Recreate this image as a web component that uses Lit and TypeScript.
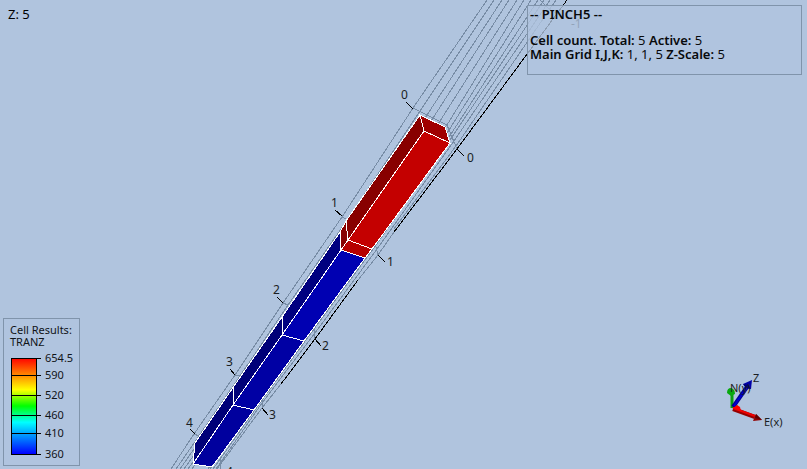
import { LitElement, html, svg, css } from "lit";
import { customElement } from "lit/decorators.js";

type Pt = [number, number];

const pts = (list: Pt[]) => list.map((p) => p.join(",")).join(" ");

// Reservoir grid box: lines that run along the column, front to back.
const gridLines: Pt[][] = [
  [[487, 0], [413, 108], [342, 217], [283, 303], [235, 375], [194, 434], [171, 469]],
  [[494, 0], [420, 111], [348, 219], [288, 305], [240, 376], [199, 436], [176, 469]],
  [[502, 0], [427, 115], [180, 469]],
  [[509, 0], [433, 118], [184, 469]],
  [[517, 0], [440, 121], [188, 469]],
  [[524, 0], [447, 125], [192, 469]],
  [[531, 0], [449, 130], [375, 235], [313, 321], [262, 392], [208, 469]],
  [[538, 0], [451, 134], [376, 241], [314, 325], [262, 396], [210, 469]],
  [[544, 0], [452, 137], [376, 245], [314, 329], [262, 400], [213, 469]],
  [[550, 0], [454, 141], [377, 249], [315, 333], [262, 403], [216, 469]],
  [[556, 0], [456, 146], [394, 229]],
  [[394, 232], [378, 255], [358, 280]],
  [[281, 384], [262, 408], [217, 469]],
  [[413, 108], [447, 125], [457, 149]],
  [[342, 217], [348, 220]],
  [[374, 244], [376, 247], [378, 255]],
  [[283, 303], [288, 305]],
  [[314, 329], [315, 339]],
  [[235, 375], [240, 376]],
  [[263, 398], [262, 408]],
  [[194, 434], [199, 436]],
  [[220, 457], [221, 469]],
  [[540, 0], [548, 8], [562, 17]],
];

const darkLines: Pt[][] = [
  [[567, 0], [457, 149], [394, 232]],
  [[358, 280], [315, 339], [281, 384]],
  [[406, 102], [413, 109]],
  [[457, 149], [464, 156]],
  [[335, 210], [342, 216]],
  [[378, 255], [385, 262]],
  [[277, 297], [283, 303]],
  [[315, 339], [321, 346]],
  [[230, 369], [235, 375]],
  [[262, 408], [268, 415]],
  [[190, 429], [195, 434]],
];

const faces: { fill: string; at: Pt[] }[] = [
  { fill: "#a00000", at: [[420, 115], [445, 127], [450, 143], [424, 131]] },
  { fill: "#880000", at: [[420, 115], [424, 131], [348, 240], [346, 221]] },
  { fill: "#c40000", at: [[424, 131], [450, 143], [372, 249], [348, 240]] },
  { fill: "#880000", at: [[346, 221], [348, 240], [341, 250], [340, 232]] },
  { fill: "#b60000", at: [[348, 240], [372, 249], [365, 258], [341, 250]] },
  { fill: "#000080", at: [[340, 232], [341, 250], [282, 335], [282, 317]] },
  { fill: "#0000b2", at: [[341, 250], [365, 258], [304, 341], [282, 335]] },
  { fill: "#000078", at: [[282, 317], [282, 335], [233, 405], [234, 386]] },
  { fill: "#0000a4", at: [[282, 335], [304, 341], [254, 410], [233, 405]] },
  { fill: "#000078", at: [[234, 386], [233, 405], [193, 464], [195, 443]] },
  { fill: "#00009e", at: [[233, 405], [254, 410], [212, 467], [193, 464]] },
];

const labels: { text: string; x: number; y: number }[] = [
  { text: "0", x: 401, y: 99 },
  { text: "0", x: 467, y: 162 },
  { text: "1", x: 331, y: 207 },
  { text: "1", x: 387, y: 266 },
  { text: "2", x: 273, y: 294 },
  { text: "2", x: 322, y: 350 },
  { text: "3", x: 226, y: 366 },
  { text: "3", x: 269, y: 419 },
  { text: "4", x: 186, y: 427 },
  { text: "4", x: 226, y: 476 },
  { text: "-1", x: 571, y: 28 },
];

const scale = [
  { value: "654.5", y: 6 },
  { value: "590", y: 23 },
  { value: "520", y: 43 },
  { value: "460", y: 63 },
  { value: "410", y: 81 },
  { value: "360", y: 102 },
];

@customElement("grid-scene")
class GridScene extends LitElement {
  static styles = css`
    :host { display: block; min-width: 0; min-height: 0; }
    svg { display: block; width: 100%; height: 100%; }
    .mesh { fill: none; stroke: #778ca5; stroke-width: 1; shape-rendering: crispEdges; }
    .dark { fill: none; stroke: #000; stroke-width: 1; shape-rendering: crispEdges; }
    .face { stroke: #fff; stroke-width: 1; shape-rendering: crispEdges; }
    .label { font: 12px "Noto Sans", sans-serif; fill: #1a1e24; }
  `;

  render() {
    return html`
      <svg viewBox="0 0 807 469" preserveAspectRatio="xMidYMid slice" role="img" aria-label="Grid column">
        ${gridLines.map((l) => svg`<polyline class="mesh" points=${pts(l)} />`)}
        ${darkLines.map((l) => svg`<polyline class="dark" points=${pts(l)} />`)}
        ${faces.map((f) => svg`<polygon class="face" fill=${f.fill} points=${pts(f.at)} />`)}
        ${labels.map((l) => svg`<text class="label" x=${l.x} y=${l.y}>${l.text}</text>`)}
      </svg>
    `;
  }
}

@customElement("color-legend")
class ColorLegend extends LitElement {
  static styles = css`
    :host {
      display: block;
      box-sizing: border-box;
      width: 77px;
      padding: 5px 0 5px 6px;
      border: 1px solid #8094ab;
      background: #b0c4decc;
      font: 11px/12px "Noto Sans", sans-serif;
      color: #101418;
    }
    .title { white-space: nowrap; }
    svg { display: block; margin-top: 4px; }
    .tick { stroke: #000; stroke-width: 1; shape-rendering: crispEdges; }
    .bar { stroke: #000; stroke-width: 1; shape-rendering: crispEdges; }
    text { fill: #101418; }
  `;

  render() {
    return html`
      <div class="title">Cell Results:<br />TRANZ</div>
      <svg width="69" height="108" role="img" aria-label="Colour scale">
        <defs>
          <linearGradient id="ramp" x1="0" y1="0" x2="0" y2="1">
            <stop offset="0" stop-color="#f00" />
            <stop offset="0.33" stop-color="#ff0" />
            <stop offset="0.5" stop-color="#0f0" />
            <stop offset="0.67" stop-color="#0ff" />
            <stop offset="1" stop-color="#00f" />
          </linearGradient>
        </defs>
        <rect class="bar" x="1" y="6" width="25" height="96" fill="url(#ramp)" />
        ${scale.map((s) => svg`
          <line class="tick" x1="1" x2="31" y1=${s.y} y2=${s.y} />
          <text x="35" y=${s.y + 4}>${s.value}</text>`)}
      </svg>
    `;
  }
}

@customElement("info-panel")
class InfoPanel extends LitElement {
  static styles = css`
    :host {
      display: block;
      box-sizing: border-box;
      padding: 1px 2px 13px;
      border: 1px solid #8094ab;
      background: #b0c4decc;
      font: 13px/14px "Noto Sans", sans-serif;
      color: #080a0c;
    }
    p { margin: 0; white-space: nowrap; }
    b { font-weight: 600; }
    .head { margin-bottom: 12px; }
  `;

  render() {
    return html`
      <p class="head"><b>-- PINCH5 --</b></p>
      <p><b>Cell count. Total:</b> 5 <b>Active:</b> 5</p>
      <p><b>Main Grid I,J,K:</b> 1, 1, 5 <b>Z-Scale:</b> 5</p>
    `;
  }
}

@customElement("axis-cross")
class AxisCross extends LitElement {
  static styles = css`
    :host { display: block; }
    svg { display: block; }
    text { font: 11px "Noto Sans", sans-serif; fill: #1a1e24; }
  `;

  render() {
    return html`
      <svg width="60" height="60" viewBox="725 370 60 60" role="img" aria-label="Axes">
        <path d="M732 408V393" stroke="#0a9c10" stroke-width="3" />
        <path d="M727 393Q727 388 731 388Q735 389 735 394L731 396Z" fill="#08a80e" />
        <path d="M733 407l4-2 2 3-3 2z" fill="#0bd010" />
        <path d="M733 407L747 387" stroke="#000090" stroke-width="4" />
        <path d="M734 406L747 387" stroke="#0000d0" stroke-width="2" />
        <path d="M752 380L743 384L746 388L751 389Z" fill="#0000a8" />
        <path d="M743 384L746 388L751 389L748 385Z" fill="#000070" />
        <path d="M733 409L755 417" stroke="#960000" stroke-width="4" />
        <path d="M733 408L755 416" stroke="#ef0000" stroke-width="2" />
        <path d="M733 408l4-3 3 2 1 4z" fill="#f00" />
        <path d="M756 414L762 420L753 421Z" fill="#900000" />
        <path d="M756 414L762 420L755 418Z" fill="#600000" />
        <text x="730" y="392">N(y)</text>
        <text x="753" y="382">Z</text>
        <text x="764" y="426">E(x)</text>
      </svg>
    `;
  }
}

@customElement("app-root")
class AppRoot extends LitElement {
  static styles = css`
    :host {
      display: grid;
      grid-template-columns: minmax(0, 1fr);
      grid-template-rows: minmax(0, 1fr);
      height: 100vh;
      overflow: hidden;
      background: #b0c4de;
    }
    .scene, .overlay { grid-area: 1 / 1; }
    .overlay {
      display: flex;
      flex-direction: column;
      justify-content: space-between;
      padding: 5px 5px 3px 3px;
      z-index: 1;
    }
    .row { display: flex; justify-content: space-between; align-items: flex-start; }
    .bottom { align-items: flex-end; }
    .zscale { padding: 1px 0 0 5px; font: 13px/16px "Noto Sans", sans-serif; color: #000; }
    .info { width: 275px; }
    .axes { margin: 0 17px 36px 0; }
  `;

  render() {
    return html`
      <grid-scene class="scene"></grid-scene>
      <div class="overlay">
        <div class="row">
          <div class="zscale">Z: 5</div>
          <info-panel class="info"></info-panel>
        </div>
        <div class="row bottom">
          <color-legend></color-legend>
          <axis-cross class="axes"></axis-cross>
        </div>
      </div>
    `;
  }
}
